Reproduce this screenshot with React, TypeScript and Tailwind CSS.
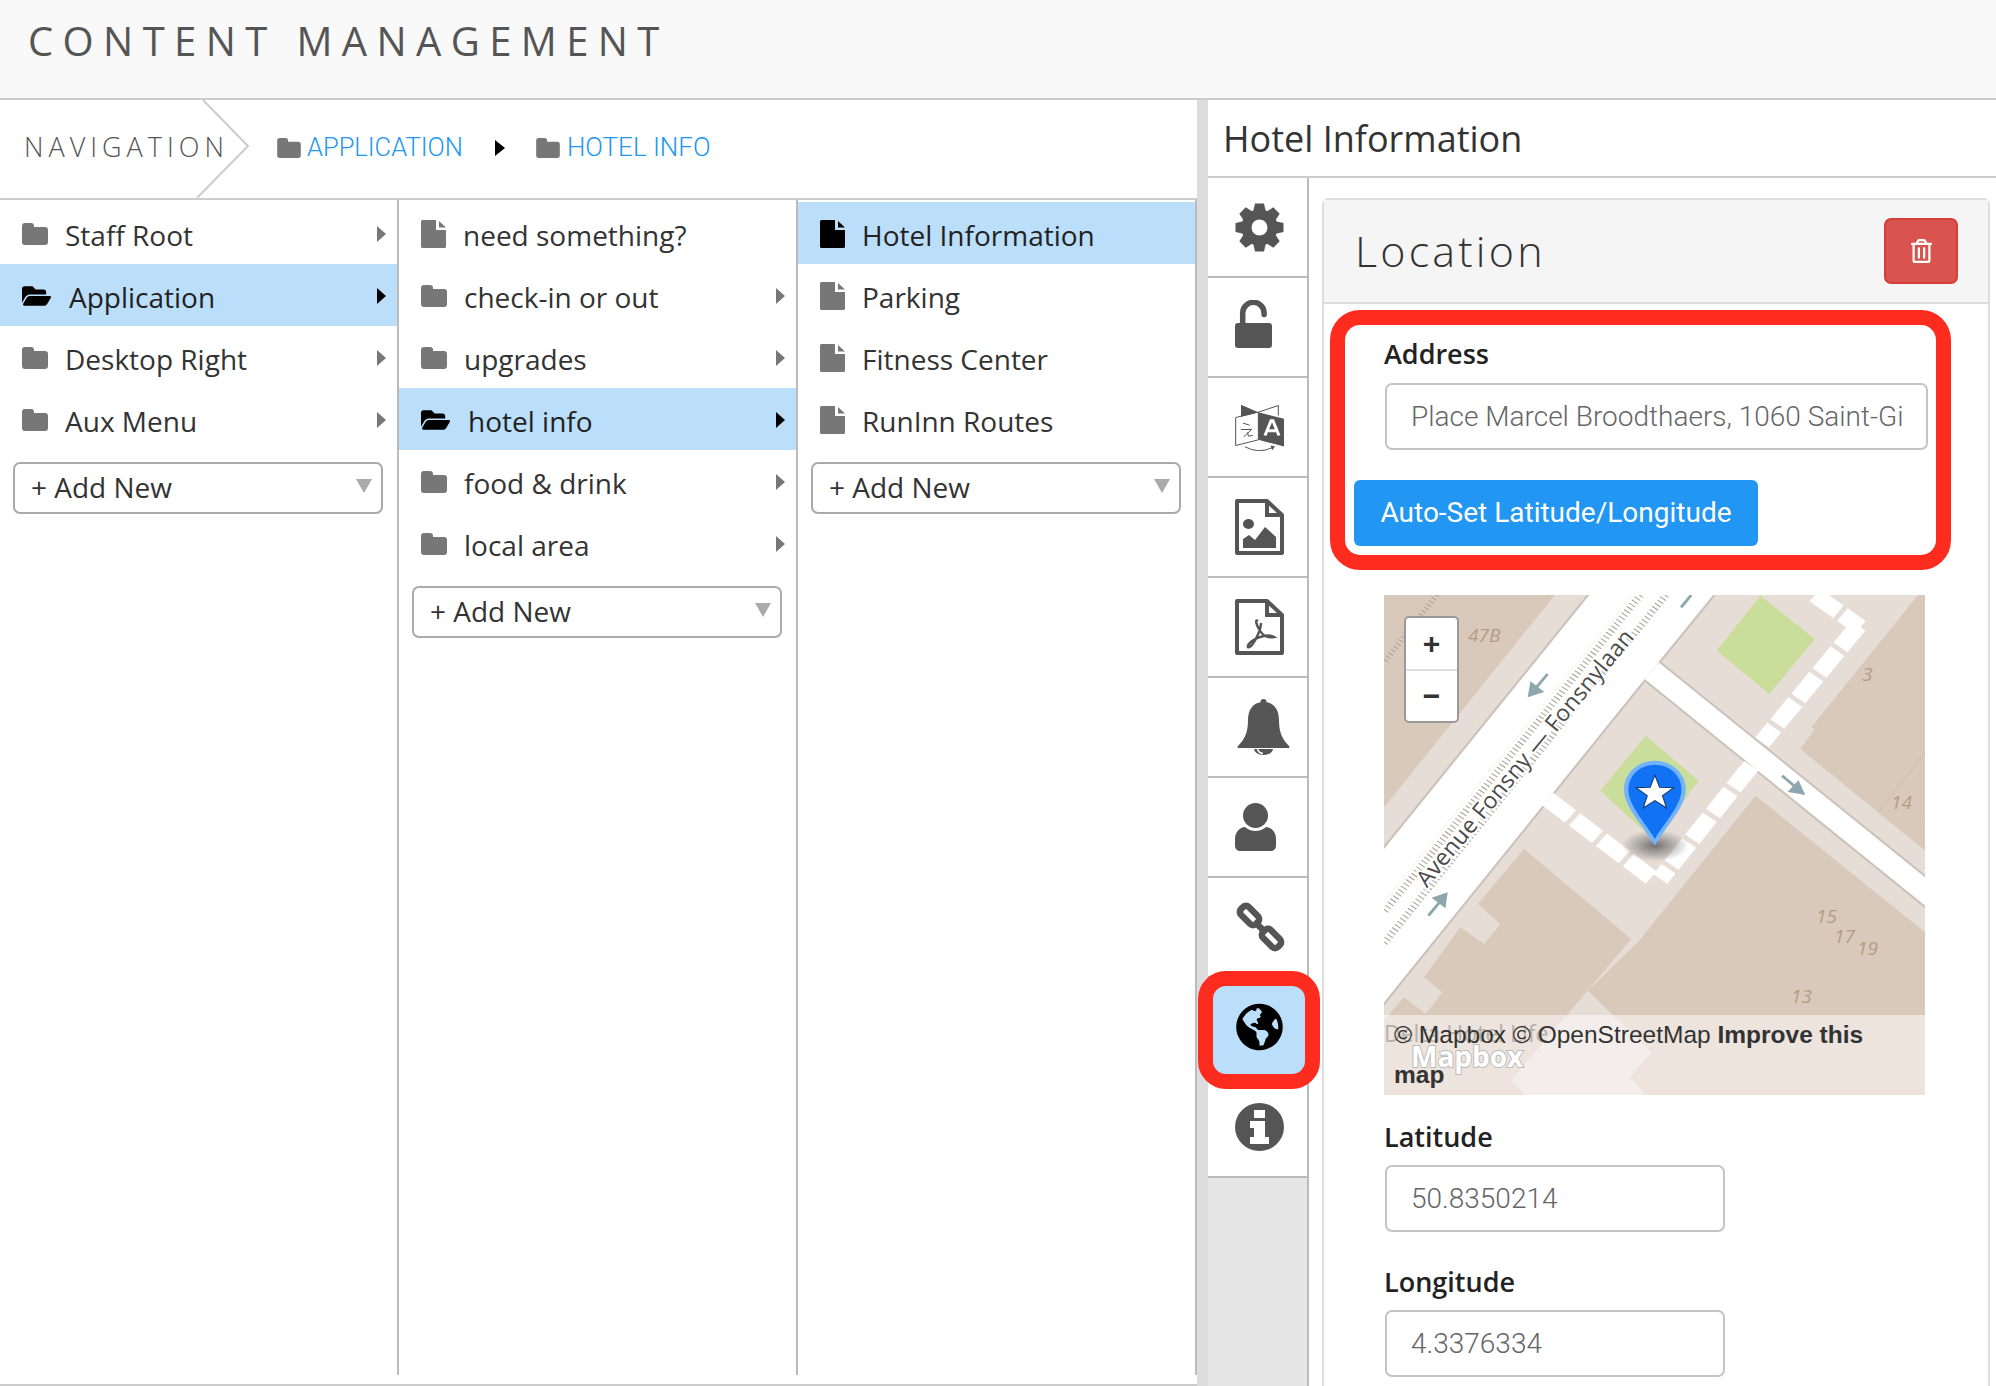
import { FaFolderOpen, FaGlobeAmericas, FaRegTrashAlt } from "react-icons/fa";

const openSans = "font-['Open_Sans',sans-serif]";
const roboto = "font-['Roboto',sans-serif]";

function Folder({ className }: { className?: string }) {
  return (
    <svg viewBox="0 0 26 22" className={className} fill="currentColor">
      <path d="M3 0h6a3 3 0 0 1 3 3v1h11a3 3 0 0 1 3 3v12a3 3 0 0 1-3 3H3a3 3 0 0 1-3-3V3a3 3 0 0 1 3-3z" />
    </svg>
  );
}

function FileIcon({ className }: { className?: string }) {
  return (
    <svg viewBox="0 0 25 28" className={className} fill="currentColor">
      <path d="M1.5 0H15v10h10v16.5a1.5 1.5 0 0 1-1.5 1.5h-22A1.5 1.500 0 0 1 0 26.5v-25A1.5 1.5 0 0 1 1.5 0z" />
      <path d="M18 1l7 6.5h-7z" />
    </svg>
  );
}

function Arrow({ active }: { active?: boolean }) {
  return (
    <svg viewBox="0 0 9 16" className={`mb-[2px] h-4 w-[9px] ${active ? "text-black" : "text-[#777]"}`} fill="currentColor">
      <path d="M0 0l9 8-9 8z" />
    </svg>
  );
}

function AddNew() {
  return (
    <div className="ml-[13px] mr-[14px] mt-[12px] flex h-[52px] items-center justify-between rounded-[7px] border-2 border-[#aaa] pb-[3px] pl-[16px] pr-[9px] text-[28px] text-[#333]">
      <span>+ Add New</span>
      <svg viewBox="0 0 16 14" className="mb-[2px] h-[14px] w-4 text-[#aaa]" fill="currentColor">
        <path d="M0 0h16L8 14z" />
      </svg>
    </div>
  );
}

type Item = { label: string; kind: "folder" | "file"; active?: boolean };

function Row({ item }: { item: Item }) {
  return (
    <div className={`flex h-[62px] items-center pl-[22px] pr-[11px] pt-[4px] text-[28px] ${item.active ? "bg-[#bbdefb] text-[#222]" : "text-[#333]"}`}>
      {item.kind === "file" ? (
        <FileIcon className={`mb-[3px] h-[28px] w-[25px] shrink-0 ${item.active ? "text-black" : "text-[#777]"}`} />
      ) : item.active ? (
        <FaFolderOpen className="mb-[3px] h-[26px] w-[29px] shrink-0 text-black" />
      ) : (
        <Folder className="mb-[3px] h-[22px] w-[26px] shrink-0 text-[#777]" />
      )}
      <span className={`flex-1 ${item.kind === "file" ? "ml-[17px]" : item.active ? "ml-[18px]" : "ml-[17px]"}`}>{item.label}</span>
      {item.kind === "folder" && <Arrow active={item.active} />}
    </div>
  );
}

const col1: Item[] = [
  { label: "Staff Root", kind: "folder" },
  { label: "Application", kind: "folder", active: true },
  { label: "Desktop Right", kind: "folder" },
  { label: "Aux Menu", kind: "folder" },
];
const col2: Item[] = [
  { label: "need something?", kind: "file" },
  { label: "check-in or out", kind: "folder" },
  { label: "upgrades", kind: "folder" },
  { label: "hotel info", kind: "folder", active: true },
  { label: "food & drink", kind: "folder" },
  { label: "local area", kind: "folder" },
];
const col3: Item[] = [
  { label: "Hotel Information", kind: "file", active: true },
  { label: "Parking", kind: "file" },
  { label: "Fitness Center", kind: "file" },
  { label: "RunInn Routes", kind: "file" },
];

function Column({ items }: { items: Item[] }) {
  return (
    <div className="w-[399px] shrink-0 border-r-2 border-[#bbb] pt-[2px]">
      {items.map((it) => (
        <Row key={it.label} item={it} />
      ))}
      <AddNew />
    </div>
  );
}

function GearIcon() {
  const angles = [0, 45, 90, 135, 180, 225, 270, 315];
  return (
    <svg viewBox="-24.500 -24.500 49 49" className="h-[49px] w-[49px]" fill="#555">
      <circle r="13" fill="none" stroke="#555" strokeWidth="10" />
      {angles.map((a) => (
        <polygon key={a} points="-6.500,-15 -4.500,-24 4.500,-24 6.500,-15" transform={`rotate(${a})`} />
      ))}
    </svg>
  );
}

function UnlockIcon() {
  return (
    <svg viewBox="0 0 37 48" className="mb-[6px] h-12 w-[37px]" fill="#555">
      <path d="M7.700 25V13a10.700 10.700 0 0 1 21.400 0v1.500" fill="none" stroke="#555" strokeWidth="5.500" strokeLinecap="round" />
      <rect x="0" y="23" width="37" height="25" rx="3" />
    </svg>
  );
}

function LanguageIcon() {
  return (
    <svg viewBox="0 0 147 145" className="mt-[3px] h-[58px] w-[49px]">
      <path d="M2 38L70 22v83L2 122z" fill="#fff" stroke="#555" strokeWidth="3" />
      <path d="M18 0l52 22-52 14z" fill="#555" />
      <path d="M70 22l60-20v30" fill="none" stroke="#555" strokeWidth="3" />
      <path d="M70 22l77 20v83l-77-20z" fill="#555" />
      <path d="M90 92l18-44h6l18 44M97 78h28" fill="none" stroke="#fff" strokeWidth="9" />
      <path d="M24 55l20 6M18 74h32L26 96M38 82l2 12 14-2" fill="none" stroke="#555" strokeWidth="3" />
      <path d="M30 126q40 22 84 2" fill="none" stroke="#555" strokeWidth="3" />
      <path d="M106 122l14 2-8 12z" fill="#555" />
    </svg>
  );
}

function FileOutline({ children }: { children: React.ReactNode }) {
  return (
    <svg viewBox="0 0 49 56" className="h-14 w-[49px]">
      <path d="M2 2h30l15 14v38H2z" fill="none" stroke="#555" strokeWidth="4" strokeLinejoin="round" />
      <path d="M32 2v14h15" fill="none" stroke="#555" strokeWidth="4" />
      {children}
    </svg>
  );
}

function BellIcon() {
  return (
    <svg viewBox="0 0 53 56" className="ml-[2px] h-14 w-[53px]" fill="#555">
      <circle cx="26.500" cy="3" r="3" />
      <path d="M26.500 3C15 3 11 12 11 21c0 12-3 19-10 26-1 1-.5 2 1 2h49c1.500 0 2-1 1-2-7-7-10-14-10-26 0-9-4-18-15.500-18z" />
      <path d="M17 50a9.500 6 0 0 0 19 0z" />
      <path d="M20.500 50q1 4 5.500 4.500" fill="none" stroke="#fff" strokeWidth="1.500" />
    </svg>
  );
}

function UserIcon() {
  return (
    <svg viewBox="0 0 41 48" className="h-12 w-[41px]" fill="#555">
      <circle cx="20.500" cy="12.500" r="12.500" />
      <path d="M0 42v-6c0-7 5-12 10-12 3 2.500 6.500 4 10.500 4s7.500-1.500 10.500-4c5 0 10 5 10 12v6c0 4-2 6-6 6H6c-4 0-6-2-6-6z" />
    </svg>
  );
}

function LinkIcon() {
  return (
    <svg viewBox="0 0 51 52" className="h-[52px] w-[51px]" fill="#555">
      <g fill="none" stroke="#555" strokeWidth="6.500">
        <rect x="-10.500" y="-5.500" width="21" height="11" rx="4" transform="translate(14.500 14.500) rotate(45)" />
        <rect x="-10.500" y="-5.500" width="21" height="11" rx="4" transform="translate(36.500 37.500) rotate(45)" />
        <path d="M21 22l9 9" />
      </g>
    </svg>
  );
}

function InfoIcon() {
  return (
    <svg viewBox="0 0 49 48" className="h-12 w-[49px]">
      <ellipse cx="24.500" cy="24" rx="24.500" ry="24" fill="#555" />
      <path d="M19 7h11v8H19zM15 18h15v16h4v7H15v-7h4v-9h-4z" fill="#fff" />
    </svg>
  );
}

const sideIcons = [
  <GearIcon />,
  <UnlockIcon />,
  <LanguageIcon />,
  <FileOutline>
    <ellipse cx="13.500" cy="25" rx="5.500" ry="5" fill="#555" />
    <path d="M8 49v-9l6-4 6 5 10-13 11 10v11z" fill="#555" />
  </FileOutline>,
  <FileOutline>
    <path d="M23 22c-3-2-2 3 1 8 4 8 9 9 15 8-5-3-15-1-22 4-6 5-5 9 0 4 4-5 9-16 9-22" fill="none" stroke="#555" strokeWidth="2.500" />
  </FileOutline>,
  <BellIcon />,
  <UserIcon />,
  <LinkIcon />,
  <FaGlobeAmericas className="h-12 w-[49px] text-black" />,
  <InfoIcon />,
];

function MapDrawing() {
  const roads = [
    "605,33 722,33 40,953 40,795",
    "825,33 945,33 757,285 40,1255 40,1093",
    "795,235 1528,880 1528,965 757,285",
  ];
  const arrows = [
    "490,270 440,335",
    "162,995 212,930",
    "1135,575 1195,630",
    "857,70 885,33",
  ];
  return (
    <svg viewBox="0 0 541 500" className="block h-[500px] w-[541px]">
      <defs>
        <radialGradient id="pin-shadow">
          <stop offset="0" stopColor="#666" stopOpacity="0.9" />
          <stop offset="1" stopColor="#666" stopOpacity="0" />
        </radialGradient>
      </defs>
      <g transform="scale(0.3636 0.3333) translate(-40 -33)">
        <rect x="40" y="33" width="1488" height="1500" fill="#e6ddd6" />
        <path d="M40 33H510L40 670z" fill="#d8c9bb" />
        <path d="M1500 45L1215 430l10 5-40 60 343 305V33h-20z" fill="#d8c9bb" />
        <path d="M1528 505L1400 685" stroke="#cbb9a9" strokeWidth="2" />
        <path d="M1062 635L1528 1045V1533H760L715 1480 775 1405 600 1220 738 1075z" fill="#d8c9bb" />
        <path d="M425 795L720 1065 600 1220 390 1490 430 1533H40V1310L95 1240 155 1290 200 1225 150 1180 250 1030 315 1080 360 1020 298 960z" fill="#d8c9bb" />
        <path d="M600 1220L775 1405 715 1480 760 1533H430L390 1490z" fill="#e6ddd6" />
        <path d="M185 33L40 235" stroke="#a9a098" strokeWidth="16" strokeDasharray="3 9" />
        {roads.map((p) => (
          <polygon key={p} points={p} fill="#fff" stroke="#cbc2b9" strokeWidth="12" />
        ))}
        {roads.map((p) => (
          <polygon key={p} points={p} fill="#fff" />
        ))}
        <polygon points="722,33 825,33 40,1093 40,953" fill="#fff" />
        <path d="M745 33L40 985" stroke="#a9a098" strokeWidth="20" strokeDasharray="3 9" />
        <path d="M815 33L40 1078" stroke="#a9a098" strokeWidth="20" strokeDasharray="3 9" />
        <polygon points="1075,35 1225,165 1100,330 955,200" fill="#cade9c" />
        <polygon points="760,455 905,590 785,770 635,620" fill="#cade9c" />
        <path d="M1345 125L1080 475" stroke="#fff" strokeWidth="48" strokeDasharray="82 14" />
        <path d="M1050 545L800 885" stroke="#fff" strokeWidth="48" strokeDasharray="82 14" />
        <path d="M490 645L780 885" stroke="#fff" strokeWidth="48" strokeDasharray="82 14" />
        <path d="M1225 33L1350 130" stroke="#fff" strokeWidth="48" strokeDasharray="82 14" />
        {arrows.map((p) => {
          const [a, b] = p.split(" ").map((s) => s.split(",").map(Number));
          return <polyline key={p} points={`${a[0]},${a[1]} ${b[0]},${b[1]}`} stroke="#8ea6ad" strokeWidth="8" />;
        })}
        <path d="M435 340l8-48 38 32z M215 925l-6 48-38-32z M1198 632l-48-8 30-36z" fill="#8ea6ad" />
        <ellipse cx="785" cy="785" rx="92" ry="48" fill="url(#pin-shadow)" />
        <path d="M785 785C750 720 700 670 700 615a85 85 0 0 1 170 0c0 55-50 105-85 170z" fill="#73b3fb" />
        <path d="M785 765C755 710 712 665 712 615a73 73 0 0 1 146 0c0 50-43 95-73 150z" fill="#1172f5" />
        <polygon points="785,573 798,610 837,611 806,635 817,672 785,650 753,672 764,635 733,611 772,610" fill="#fff" stroke="#10396f" strokeWidth="3" />
      </g>
      <g className="font-['Open_Sans',sans-serif] italic" fontSize="19" fill="#b39c86">
        <text x="84" y="47">47B</text>
        <text x="478" y="86">3</text>
        <text x="507" y="214">14</text>
        <text x="538" y="236">1</text>
        <text x="432" y="328">15</text>
        <text x="450" y="348">17</text>
        <text x="473" y="360">19</text>
        <text x="407" y="408">13</text>
      </g>
      <text
        transform="translate(147 168) rotate(-50.300)"
        textAnchor="middle"
        fontSize="23"
        textLength="326"
        fill="#4a4a4a"
        stroke="#fff"
        strokeWidth="4"
        paintOrder="stroke"
        className="font-['Open_Sans',sans-serif]"
      >
        Avenue Fonsny — Fonsnylaan
      </text>
      <rect x="0" y="420" width="541" height="80" fill="#fff" fillOpacity="0.5" />
      <text x="0" y="447" fontSize="23" fill="#b5b0aa" className="font-['Open_Sans',sans-serif]">Delta Hotel Life</text>
      <text x="27" y="472" fontSize="28" fontWeight="700" fill="#fff" stroke="#bbb" strokeWidth="2" paintOrder="stroke" className="font-['Open_Sans',sans-serif]">Mapbox</text>
    </svg>
  );
}

function TextInput({ value, className }: { value: string; className: string }) {
  return (
    <input
      readOnly
      value={value}
      className={`block h-[67px] rounded-[7px] border-2 border-[#c4c4c4] bg-white pl-[24px] pr-[24px] text-[28px] font-light text-[#666] outline-none ${roboto} ${className}`}
    />
  );
}

export default function App() {
  return (
    <div className={`relative flex h-[1386px] w-[1996px] flex-col overflow-hidden bg-white ${openSans}`}>
      <header className="flex h-[100px] shrink-0 items-start border-b-2 border-[#ccc] bg-[#f9f9f9] pl-[28px] pt-[13px]">
        <h1 className="text-[40px] font-normal leading-[56px] tracking-[9.400px] text-[#555]">CONTENT MANAGEMENT</h1>
      </header>

      <div className="flex min-h-0 flex-1">
        {/* navigation side */}
        <div className="flex w-[1197px] shrink-0 flex-col border-b-2 border-[#ccc]">
          <div className="relative flex h-[100px] shrink-0 items-center border-b-2 border-[#ccc] pb-[3px] pl-[24px]">
            <span className="mb-[1px] w-[253px] text-[27px] font-light tracking-[5px] text-[#555]">NAVIGATION</span>
            <svg viewBox="0 0 54 98" className="absolute left-[196px] top-0 h-[98px] w-[54px]" fill="none" stroke="#ccc" strokeWidth="2">
              <path d="M7 0l45 46L1 98" />
            </svg>
            <Folder className="h-[20px] w-[24px] text-[#777]" />
            <span className={`ml-[6px] text-[25.500px] font-light text-[#2196f3] ${roboto}`}>APPLICATION</span>
            <svg viewBox="0 0 10 16" className="ml-[32px] h-4 w-[10px] text-black" fill="currentColor">
              <path d="M0 0l10 8-10 8z" />
            </svg>
            <Folder className="ml-[31px] h-[20px] w-[24px] text-[#777]" />
            <span className={`ml-[7px] text-[26px] font-light text-[#2196f3] ${roboto}`}>HOTEL INFO</span>
          </div>
          <div className="flex h-[1175px] shrink-0">
            <Column items={col1} />
            <Column items={col2} />
            <Column items={col3} />
          </div>
        </div>

        <div className="w-[11px] shrink-0 bg-[#dcdcdc]" />

        {/* detail side */}
        <div className="flex min-w-0 flex-1 flex-col">
          <div className="flex h-[78px] shrink-0 items-center border-b-2 border-[#ccc] pl-[15px] pt-[2px] text-[36px] text-[#333]">Hotel Information</div>
          <div className="flex min-h-0 flex-1">
            <div className="flex w-[101px] shrink-0 flex-col border-r-2 border-[#bbb] bg-[#e5e5e5]">
              {sideIcons.map((icon, i) => (
                <div key={i} className={`flex h-[100px] items-center border-b-2 border-[#bbb] pl-[27px] ${i === 8 ? "bg-[#bbdefb]" : "bg-white"}`}>
                  {icon}
                </div>
              ))}
            </div>
            <div className="ml-[13px] mt-[20px] w-[668px] rounded-t-[7px] border-x-2 border-t-2 border-[#ddd]">
              <div className="flex h-[104px] items-center justify-between border-b-2 border-[#ddd] bg-[#f5f5f5] pl-[31px] pr-[30px]">
                <h2 className="text-[43px] font-light tracking-[3.200px] text-[#333]">Location</h2>
                <button className="flex h-[66px] w-[74px] items-center justify-center rounded-[7px] border-2 border-[#d43f3a] bg-[#d9534f]">
                  <FaRegTrashAlt className="h-6 w-[21px] text-white" />
                </button>
              </div>
              <div className="pt-[30px]">
                <label className="ml-[60px] block text-[27px] font-semibold leading-[40px] text-[#222]">Address</label>
                <TextInput value="Place Marcel Broodthaers, 1060 Saint-Gilles, Belgium" className="ml-[61px] mt-[9px] w-[543px]" />
                <button className={`ml-[30px] mt-[30px] block h-[66px] w-[404px] rounded-[6px] bg-[#2196f3] text-[28px] text-white ${roboto}`}>Auto-Set Latitude/Longitude</button>
                <div className="relative ml-[60px] mt-[49px] h-[500px] w-[541px]">
                  <MapDrawing />
                  <div className="absolute left-[20px] top-[21px] flex h-[107px] w-[55px] flex-col rounded-[5px] border-2 border-[#999] bg-white text-[#333]">
                    <span className="flex flex-1 items-center justify-center border-b-2 border-[#ddd] font-['Liberation_Sans',sans-serif] text-[30px] font-bold">+</span>
                    <span className="flex flex-1 items-center justify-center font-['Liberation_Sans',sans-serif] text-[30px] font-bold">−</span>
                  </div>
                  <div className="absolute inset-x-0 bottom-0 h-[80px] pl-[10px] pr-[24px] font-['Liberation_Sans',sans-serif] text-[24.500px] leading-[40px] text-[#333]">
                    © Mapbox © OpenStreetMap <b>Improve this map</b>
                  </div>
                </div>
                <label className="ml-[60px] mt-[22px] block text-[27px] font-semibold leading-[40px] text-[#222]">Latitude</label>
                <TextInput value="50.8350214" className="ml-[61px] mt-[8px] w-[340px]" />
                <label className="ml-[60px] mt-[30px] block text-[27px] font-semibold leading-[40px] text-[#222]">Longitude</label>
                <TextInput value="4.3376334" className="ml-[61px] mt-[8px] w-[340px]" />
              </div>
            </div>
          </div>
        </div>
      </div>

      {/* annotation frames */}
      <div className="pointer-events-none absolute left-[1330px] top-[310px] h-[260px] w-[621px] rounded-[30px] border-[15px] border-[#fe2c1f]" />
      <div className="pointer-events-none absolute left-[1198px] top-[971px] h-[118px] w-[122px] rounded-[28px] border-[15px] border-[#fe2c1f]" />
    </div>
  );
}
